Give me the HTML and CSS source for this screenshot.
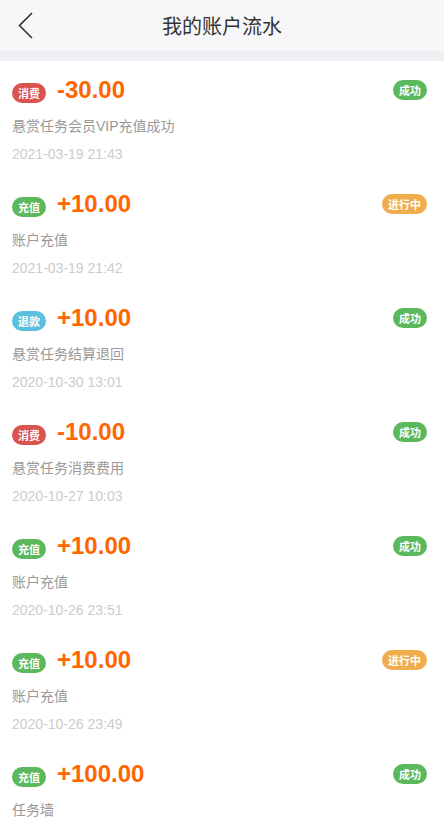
FILE: index.html
```html
<!DOCTYPE html>
<html lang="zh-CN">
<head>
    <meta charset="UTF-8">
    <meta name="viewport" content="width=device-width, initial-scale=1.0">
    <title>我的账户流水</title>
    <link rel="stylesheet" href="styles.css">
</head>
<body>
    <header class="topbar">
        <a class="back" href="#">
            <svg width="16" height="28" viewBox="0 0 16 28">
                <polyline points="14,1 1.5,13.5 14,26" fill="none" stroke="#333" stroke-width="1.6"/>
            </svg>
        </a>
        <h1>我的账户流水</h1>
    </header>
    <div class="divider"></div>

    <ul class="records">
        <li class="record">
            <div class="record-head">
                <span class="tag tag-red">消费</span>
                <span class="amount">-30.00</span>
                <span class="state state-green">成功</span>
            </div>
            <p class="desc">悬赏任务会员VIP充值成功</p>
            <p class="time">2021-03-19 21:43</p>
        </li>
        <li class="record">
            <div class="record-head">
                <span class="tag tag-green">充值</span>
                <span class="amount">+10.00</span>
                <span class="state state-orange">进行中</span>
            </div>
            <p class="desc">账户充值</p>
            <p class="time">2021-03-19 21:42</p>
        </li>
        <li class="record">
            <div class="record-head">
                <span class="tag tag-blue">退款</span>
                <span class="amount">+10.00</span>
                <span class="state state-green">成功</span>
            </div>
            <p class="desc">悬赏任务结算退回</p>
            <p class="time">2020-10-30 13:01</p>
        </li>
        <li class="record">
            <div class="record-head">
                <span class="tag tag-red">消费</span>
                <span class="amount">-10.00</span>
                <span class="state state-green">成功</span>
            </div>
            <p class="desc">悬赏任务消费费用</p>
            <p class="time">2020-10-27 10:03</p>
        </li>
        <li class="record">
            <div class="record-head">
                <span class="tag tag-green">充值</span>
                <span class="amount">+10.00</span>
                <span class="state state-green">成功</span>
            </div>
            <p class="desc">账户充值</p>
            <p class="time">2020-10-26 23:51</p>
        </li>
        <li class="record">
            <div class="record-head">
                <span class="tag tag-green">充值</span>
                <span class="amount">+10.00</span>
                <span class="state state-orange">进行中</span>
            </div>
            <p class="desc">账户充值</p>
            <p class="time">2020-10-26 23:49</p>
        </li>
        <li class="record">
            <div class="record-head">
                <span class="tag tag-green">充值</span>
                <span class="amount">+100.00</span>
                <span class="state state-green">成功</span>
            </div>
            <p class="desc">任务墙</p>
        </li>
    </ul>
</body>
</html>
```

FILE: styles.css
```css
body {
    margin: 0;
    background: #fff;
    font-family: "Liberation Sans", Arial, "Noto Sans CJK SC", sans-serif;
    color: #333;
}
.topbar {
    height: 51px;
    background: #f7f7f9;
    display: flex;
    align-items: center;
    justify-content: center;
    position: relative;
}
.back {
    position: absolute;
    left: 18px;
    top: 12px;
    display: block;
    line-height: 0;
}
.topbar h1 {
    margin: 0;
    font-size: 20px;
    font-weight: normal;
    color: #333;
    font-family: "Noto Sans CJK SC", sans-serif;
}
.divider {
    height: 10px;
    background: #efeff4;
}
.records {
    list-style: none;
    margin: 0;
    padding: 0;
}
.record {
    padding: 15px 17px 11px 12px;
}
.record-head {
    display: flex;
    align-items: baseline;
    height: 28px;
}
.tag,
.state {
    display: inline-block;
    height: 20px;
    line-height: 20px;
    padding: 0 6px;
    border-radius: 10px;
    color: #fff;
    font-size: 11px;
    font-weight: bold;
    font-family: "Noto Sans CJK SC", sans-serif;
}
.state {
    margin-left: auto;
    align-self: center;
}
.tag-red { background: #d9534f; }
.tag-green { background: #5cb85c; }
.tag-blue { background: #5bc0de; }
.state-green { background: #5cb85c; }
.state-orange { background: #f0ad4e; }
.amount {
    margin-left: 11px;
    font-size: 24px;
    line-height: 28px;
    font-weight: bold;
    color: #ff6600;
}
.desc {
    margin: 12px 0 0;
    font-size: 14px;
    line-height: 20px;
    color: #999;
}
.time {
    margin: 8px 0 0;
    font-size: 14px;
    line-height: 20px;
    color: #ccc;
}
```
